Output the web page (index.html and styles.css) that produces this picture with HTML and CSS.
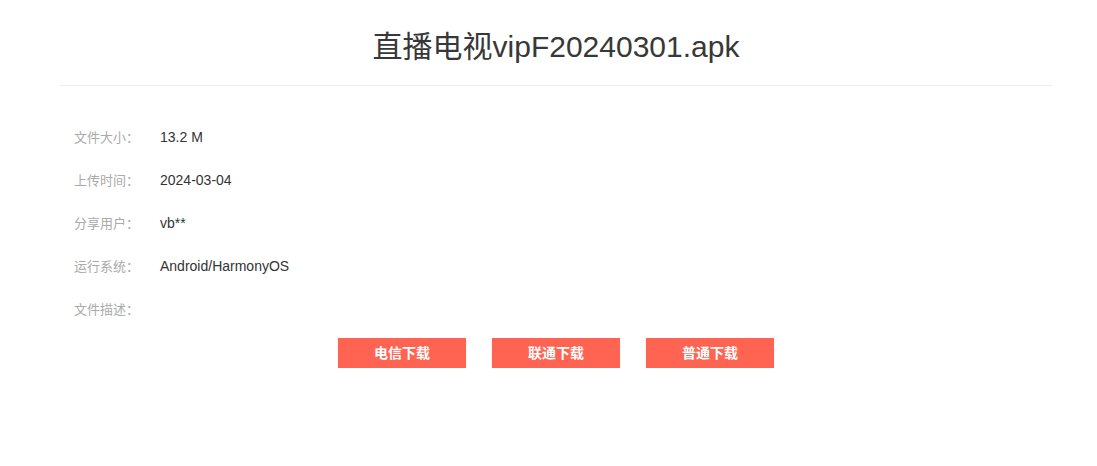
FILE: index.html
```html
<!DOCTYPE html>
<html lang="zh-CN">
<head>
<meta charset="utf-8">
<title>直播电视vipF20240301.apk</title>
<link rel="stylesheet" href="styles.css">
</head>
<body>
<div class="page">
  <h1 class="title">直播电视vipF20240301.apk</h1>
  <div class="info">
    <div class="row"><span class="label">文件大小：</span><span class="value">13.2 M</span></div>
    <div class="row"><span class="label">上传时间：</span><span class="value">2024-03-04</span></div>
    <div class="row"><span class="label">分享用户：</span><span class="value">vb**</span></div>
    <div class="row"><span class="label">运行系统：</span><span class="value">Android/HarmonyOS</span></div>
    <div class="row"><span class="label">文件描述：</span><span class="value"></span></div>
  </div>
  <div class="buttons">
    <a class="btn" href="#">电信下载</a>
    <a class="btn" href="#">联通下载</a>
    <a class="btn" href="#">普通下载</a>
  </div>
</div>
</body>
</html>
```
FILE: styles.css
```css
html, body {
  margin: 0;
  padding: 0;
  background: #fff;
}
body {
  font-family: "Liberation Sans", Arial, "Noto Sans CJK SC", sans-serif;
  color: #333;
}
.page {
  width: 992px;
  margin-left: 60px;
}
.title {
  margin: 0;
  height: 86px;
  box-sizing: border-box;
  padding-top: 27px;
  border-bottom: 1px solid #eee;
  text-align: center;
  font-size: 30px;
  font-weight: normal;
  line-height: 40px;
  color: #383838;
}
.info {
  padding: 29px 0 0 14px;
}
.row {
  display: flex;
  height: 43px;
  align-items: center;
  font-size: 13px;
}
.label {
  width: 86px;
  color: #aaa;
}
.value {
  color: #333;
  font-size: 14px;
}
.buttons {
  display: flex;
  justify-content: center;
  gap: 26px;
  margin-top: 8px;
}
.btn {
  display: block;
  width: 128px;
  height: 30px;
  line-height: 30px;
  text-align: center;
  background: #ff6352;
  color: #fff;
  font-size: 14px;
  font-weight: bold;
  text-decoration: none;
  box-shadow: 0 1px 1px rgba(200, 120, 110, 0.35);
}
```
